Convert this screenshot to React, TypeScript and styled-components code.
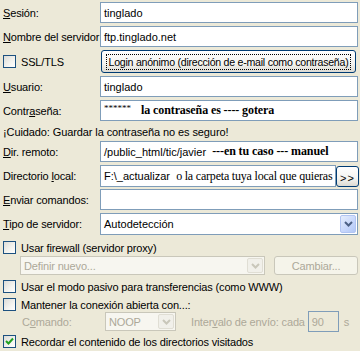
import * as React from "react";
import styled, { createGlobalStyle, css } from "styled-components";

const Global = createGlobalStyle`
  html, body {
    margin: 0;
    padding: 0;
    background: #ece9d8;
  }
  body {
    font-family: "Liberation Sans", Arial, sans-serif;
    font-size: 11px;
    color: #000;
  }
`;

const Panel = styled.div`
  width: 360px;
  height: 351px;
  overflow: hidden;
  background: #ece9d8;
  padding: 2px 2px 0 3px;
  box-sizing: border-box;
  display: flex;
  flex-direction: column;
`;

const FieldRow = styled.div<{ $h?: number; $mt?: number }>`
  display: grid;
  grid-template-columns: 97px 1fr;
  align-items: center;
  height: ${(p) => p.$h ?? 21}px;
  margin-top: ${(p) => p.$mt ?? 0}px;
`;

const Label = styled.span`
  white-space: nowrap;
  letter-spacing: -0.15px;
`;

const fieldBox = css`
  box-sizing: border-box;
  height: 100%;
  border: 1px solid #7f9db9;
  background: #fff;
  display: flex;
  align-items: center;
  padding: 0 3px;
  white-space: nowrap;
  overflow: hidden;
`;

const TextBox = styled.div`
  ${fieldBox};
  width: 258px;
`;

const Serif = styled.span<{ $bold?: boolean }>`
  font-family: "Liberation Serif", "Times New Roman", serif;
  font-size: 12px;
  font-weight: ${(p) => (p.$bold ? 700 : 400)};
  letter-spacing: ${(p) => (p.$bold ? "-0.1px" : "-0.2px")};
`;

const Stars = styled.span`
  font-family: "Liberation Serif", serif;
  font-size: 9px;
  margin-right: 10px;
  position: relative;
  top: -3px;
`;

const XpButton = styled.div<{ $disabled?: boolean; $w?: number }>`
  box-sizing: border-box;
  height: 100%;
  width: ${(p) => (p.$w ? `${p.$w}px` : "auto")};
  border: 1px solid ${(p) => (p.$disabled ? "#c9c7ba" : "#003c74")};
  border-radius: 3px;
  background: ${(p) =>
    p.$disabled
      ? "#f5f4ea"
      : "linear-gradient(#ffffff 0%, #f4f4f0 60%, #dcdad2 100%)"};
  color: ${(p) => (p.$disabled ? "#aca899" : "#000")};
  display: flex;
  align-items: center;
  justify-content: center;
  white-space: nowrap;
  overflow: hidden;
`;

const FocusText = styled.span`
  outline: 1px dotted #000;
  outline-offset: 1px;
  padding: 0 1px;
  font-size: 10.6px;
  letter-spacing: -0.25px;
`;

const LocalWrap = styled.div`
  display: flex;
  height: 100%;
  align-items: stretch;
`;

const LocalBox = styled.div`
  ${fieldBox};
  width: 236px;
  padding-right: 0;
`;

const MoreBtn = styled(XpButton)`
  width: 23px;
  height: 21px;
  margin-top: 1px;
  font-size: 11px;
  letter-spacing: 1px;
  padding-top: 3px;
  box-sizing: border-box;
  flex: none;
`;

const SelectBox = styled.div<{ $disabled?: boolean; $w: number }>`
  ${fieldBox};
  width: ${(p) => p.$w}px;
  padding: 0 1px 0 3px;
  justify-content: space-between;
  border-color: ${(p) => (p.$disabled ? "#c9c7ba" : "#7f9db9")};
  background: ${(p) => (p.$disabled ? "#f7f6f0" : "#fff")};
  color: ${(p) => (p.$disabled ? "#aca899" : "#000")};
`;

const Arrow = styled.div<{ $disabled?: boolean }>`
  width: 16px;
  height: calc(100% - 2px);
  box-sizing: border-box;
  border: 1px solid ${(p) => (p.$disabled ? "#e0ded4" : "#b2c5f3")};
  border-radius: 2px;
  background: ${(p) =>
    p.$disabled
      ? "#f1f0ea"
      : "linear-gradient(135deg, #e6eefc 0%, #c6d6fb 60%, #b3c8f5 100%)"};
  display: flex;
  align-items: center;
  justify-content: center;
`;

const Chevron = ({ color }: { color: string }) => (
  <svg width="9" height="6" viewBox="0 0 9 6">
    <path d="M1 1 L4.5 4.5 L8 1" fill="none" stroke={color} strokeWidth="2" />
  </svg>
);

const Warning = styled.div`
  height: 16px;
  margin-top: 3px;
  display: flex;
  align-items: center;
  letter-spacing: -0.1px;
`;

const CheckRow = styled.div<{ $mt?: number }>`
  display: flex;
  align-items: center;
  gap: 5px;
  height: 13px;
  margin-top: ${(p) => p.$mt ?? 0}px;
  white-space: nowrap;
  letter-spacing: -0.15px;
`;

const Box = styled.div`
  width: 13px;
  height: 13px;
  box-sizing: border-box;
  border: 1px solid #1c5180;
  background: linear-gradient(135deg, #dcdcd7 0%, #f4f4f0 60%, #ffffff 100%);
  display: flex;
  align-items: center;
  justify-content: center;
  flex: none;
`;

const Check = ({ checked }: { checked?: boolean }) => (
  <Box>
    {checked && (
      <svg width="9" height="9" viewBox="0 0 9 9">
        <path d="M1 4 L3.5 6.5 L8 1.5" fill="none" stroke="#21a121" strokeWidth="2" />
      </svg>
    )}
  </Box>
);

const SubRow = styled.div<{ $h: number; $mt?: number; $pl?: number }>`
  display: flex;
  align-items: center;
  height: ${(p) => p.$h}px;
  margin-top: ${(p) => p.$mt ?? 0}px;
  padding-left: ${(p) => p.$pl ?? 17}px;
  color: #aca899;
  white-space: nowrap;
  letter-spacing: -0.15px;
`;

const Gap = styled.div<{ $w: number }>`
  width: ${(p) => p.$w}px;
  flex: none;
`;

const CmdLabel = styled.span`
  width: 83px;
  flex: none;
`;

const IntervalBox = styled.div`
  box-sizing: border-box;
  width: 31px;
  height: 21px;
  border: 1px solid #7f9db9;
  background: #ece9d8;
  color: #aca899;
  display: flex;
  align-items: center;
  padding-left: 3px;
`;

const U = styled.u`
  text-decoration-thickness: 1px;
  text-underline-offset: 1px;
`;

export default function App(): React.ReactElement {
  return (
    <>
      <Global />
      <Panel>
        <FieldRow>
          <Label>
            <U>S</U>esión:
          </Label>
          <TextBox>tinglado</TextBox>
        </FieldRow>
        <FieldRow $mt={3}>
          <Label>
            <U>N</U>ombre del servidor
          </Label>
          <TextBox>ftp.tinglado.net</TextBox>
        </FieldRow>
        <FieldRow $mt={3} $h={23}>
          <CheckRow>
            <Check />
            <span>SSL/TLS</span>
          </CheckRow>
          <XpButton $w={255} style={{ marginLeft: 1 }}>
            <FocusText>Login anónimo (dirección de e-mail como contraseña)</FocusText>
          </XpButton>
        </FieldRow>
        <FieldRow $mt={3}>
          <Label>
            <U>U</U>suario:
          </Label>
          <TextBox>tinglado</TextBox>
        </FieldRow>
        <FieldRow $mt={3}>
          <Label>
            Contr<U>a</U>seña:
          </Label>
          <TextBox>
            <Stars>******</Stars>
            <Serif $bold>la contraseña es ---- gotera</Serif>
          </TextBox>
        </FieldRow>
        <Warning>¡Cuidado: Guardar la contraseña no es seguro!</Warning>
        <FieldRow $mt={1}>
          <Label>
            <U>D</U>ir. remoto:
          </Label>
          <TextBox>
            <span>/public_html/tic/javier&nbsp;&nbsp;</span>
            <Serif $bold>---en tu caso --- manuel</Serif>
          </TextBox>
        </FieldRow>
        <FieldRow $mt={3} $h={22}>
          <Label>
            Directorio <U>l</U>ocal:
          </Label>
          <LocalWrap>
            <LocalBox>
              <span>F:\_actualizar&nbsp;&nbsp;</span>
              <Serif>o la carpeta tuya local que quieras</Serif>
            </LocalBox>
            <MoreBtn>&gt;&gt;</MoreBtn>
          </LocalWrap>
        </FieldRow>
        <FieldRow $mt={2}>
          <Label>
            <U>E</U>nviar comandos:
          </Label>
          <TextBox />
        </FieldRow>
        <FieldRow $mt={3} $h={22}>
          <Label>
            <U>T</U>ipo de servidor:
          </Label>
          <SelectBox $w={258}>
            <span>Autodetección</span>
            <Arrow>
              <Chevron color="#4d6185" />
            </Arrow>
          </SelectBox>
        </FieldRow>
        <CheckRow $mt={6}>
          <Check />
          <span>Usar firewall (servidor proxy)</span>
        </CheckRow>
        <SubRow $h={19} $mt={2}>
          <SelectBox $w={246} $disabled>
            <span>Definir nuevo...</span>
            <Arrow $disabled>
              <Chevron color="#c9c7ba" />
            </Arrow>
          </SelectBox>
          <Gap $w={9} />
          <XpButton $w={84} $disabled>
            Cambiar...
          </XpButton>
        </SubRow>
        <CheckRow $mt={5}>
          <Check />
          <span>Usar el modo pasivo para transferencias (como WWW)</span>
        </CheckRow>
        <CheckRow $mt={5}>
          <Check />
          <span>Mantener la conexión abierta con...:</span>
        </CheckRow>
        <SubRow $h={21} $pl={19}>
          <CmdLabel>
            C<U>o</U>mando:
          </CmdLabel>
          <SelectBox $w={71} $disabled style={{ height: 19 }}>
            <span>NOOP</span>
            <Arrow $disabled>
              <Chevron color="#c9c7ba" />
            </Arrow>
          </SelectBox>
          <Gap $w={15} />
          <span>
            Inter<U>v</U>alo de envío: cada
          </span>
          <Gap $w={3} />
          <IntervalBox>90</IntervalBox>
          <Gap $w={5} />
          <span>s</span>
        </SubRow>
        <CheckRow $mt={3}>
          <Check checked />
          <span>Recordar el contenido de los directorios visitados</span>
        </CheckRow>
      </Panel>
    </>
  );
}
